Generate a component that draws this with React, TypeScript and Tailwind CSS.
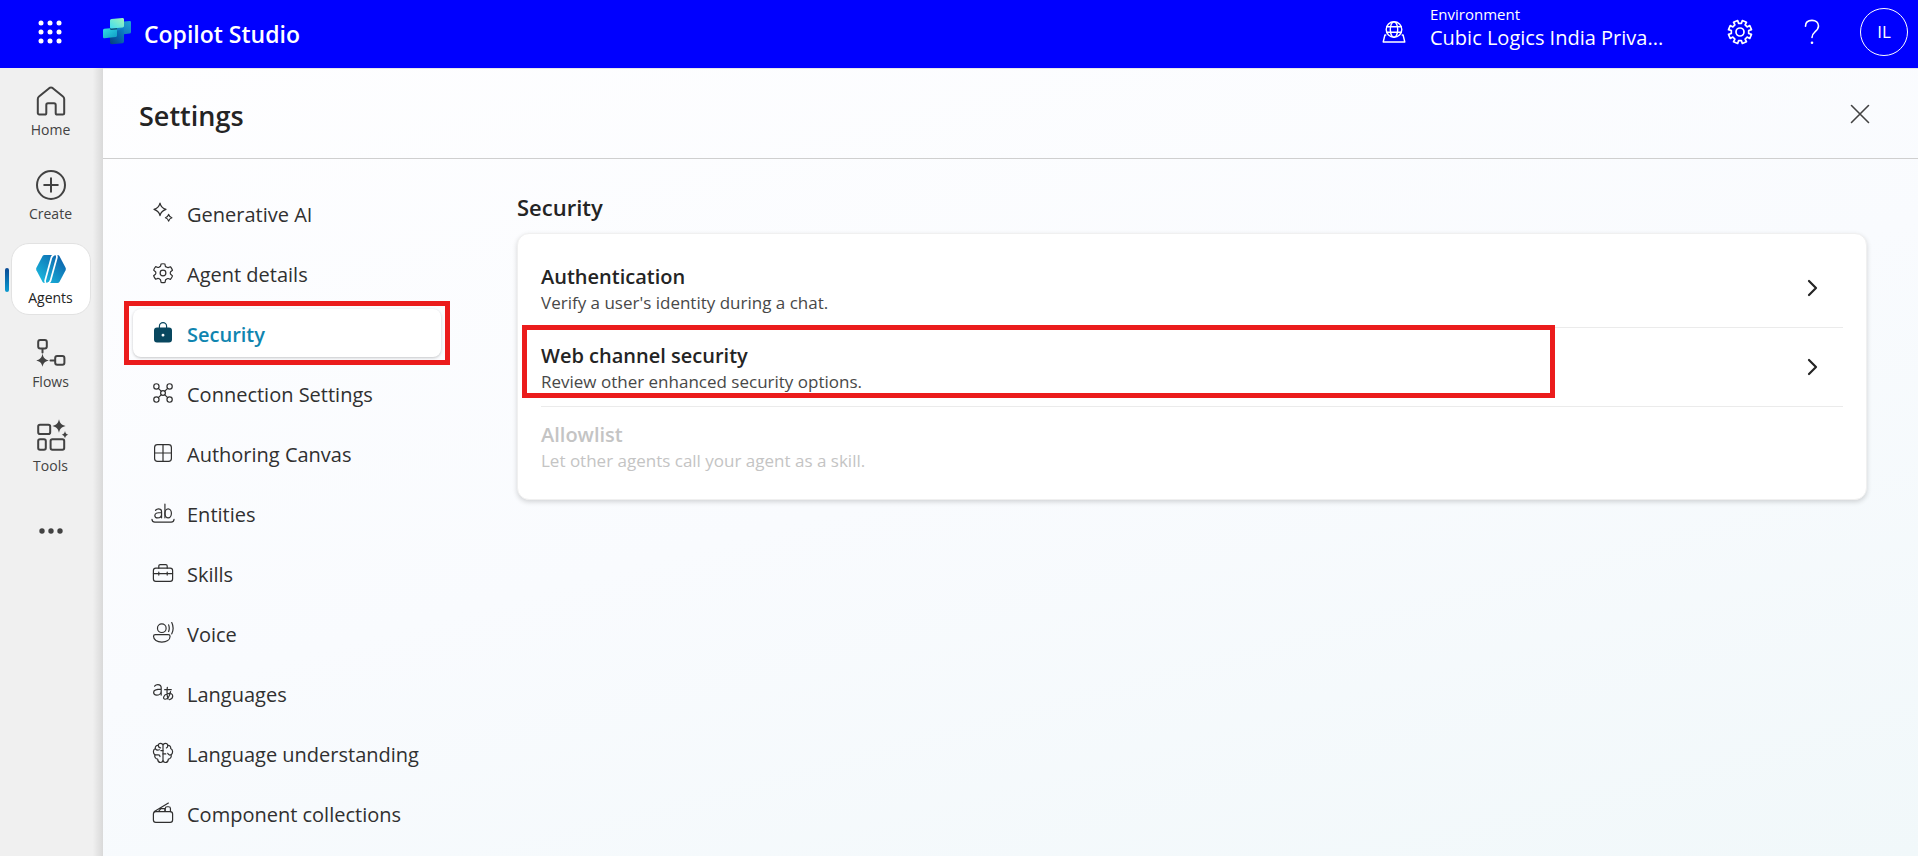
import type { ReactNode } from "react";

function Icon({ children, size = 24, box = 20 }: { children: ReactNode; size?: number; box?: number }) {
  return (
    <svg
      width={size}
      height={size}
      viewBox={`0 0 ${box} ${box}`}
      fill="none"
      stroke="currentColor"
      strokeLinecap="round"
      strokeLinejoin="round"
      aria-hidden="true"
      className="shrink-0"
    >
      {children}
    </svg>
  );
}

/* Header drawings */

function Waffle() {
  return (
    <Icon box={24}>
      <g fill="currentColor" stroke="none">
        {[3, 12, 21].map((y) => [3, 12, 21].map((x) => <circle key={`${x}-${y}`} cx={x} cy={y} r="2.5" />))}
      </g>
    </Icon>
  );
}

function Logo() {
  return (
    <svg width="28" height="28" viewBox="0 0 28 28" aria-hidden="true" className="shrink-0">
      <defs>
        <linearGradient id="logo-mint" x1="0" y1="1" x2="1" y2="0">
          <stop stopColor="#3ddcf0" />
          <stop offset="1" stopColor="#a3f5b8" />
        </linearGradient>
        <linearGradient id="logo-cyan" x1="0" y1="0" x2="1" y2="1">
          <stop stopColor="#33dbe8" />
          <stop offset="1" stopColor="#0e9dc4" />
        </linearGradient>
        <linearGradient id="logo-right" x1="1" y1="0" x2="0" y2="1">
          <stop stopColor="#1fa5d6" />
          <stop offset="1" stopColor="#0a5fae" />
        </linearGradient>
        <linearGradient id="logo-base" x1="1" y1="0" x2="0" y2="1">
          <stop stopColor="#0c86d0" />
          <stop offset="1" stopColor="#043b80" />
        </linearGradient>
      </defs>
      <path d="M7 9.5 21 3.6l5.6-.5c.8 0 1.4.5 1.4 1.3V14c0 .8-.6 1.500-1.400 1.600l-5.600.6L7 18Z" fill="url(#logo-right)" />
      <path d="M7 18 21 9v14.600c0 .8-.6 1.500-1.400 1.600L9 26.300c-1.100.1-2-.6-2-1.700Z" fill="url(#logo-base)" />
      <path d="M7 10 14 9.500v8.300l-7 1.900Z" fill="#0a5376" />
      <path d="M0 12.300c0-.8.6-1.400 1.400-1.500L7 10.300v.4c0 .8.6 1.300 1.400 1.200l5.600-.5v6c0 .8-.6 1.500-1.400 1.600L1.500 20.200c-.8.1-1.500-.5-1.500-1.300Z" fill="url(#logo-cyan)" />
      <path d="M7 2.600c0-.8.6-1.500 1.400-1.600L19.500 0c.8-.1 1.500.5 1.500 1.300V8c0 .8-.6 1.400-1.400 1.500L8.500 10.600C7.700 10.700 7 10.100 7 9.300Z" fill="url(#logo-mint)" />
    </svg>
  );
}

function EnvironmentIcon() {
  return (
    <Icon box={24}>
      <g strokeWidth="1.400">
        <circle cx="12" cy="9.500" r="7.800" />
        <ellipse cx="12" cy="9.500" rx="3.700" ry="7.800" />
        <path d="M4.800 6.800h14.400M4.800 12.200h14.400" />
        <path d="M3.800 15H2.900L1.200 22h21.600l-1.700-7h-.9" />
      </g>
    </Icon>
  );
}

function HeaderGear() {
  const d = Array.from({ length: 8 }, (_, i) => {
    const point = (r: number, deg: number) => {
      const a = ((i * 45 + 22.5 + deg) * Math.PI) / 180;
      return `${(14 + r * Math.cos(a)).toFixed(2)} ${(14 + r * Math.sin(a)).toFixed(2)}`;
    };
    return `${i ? "L" : "M"}${point(8.8, -13)}L${point(11.7, -11)}L${point(11.7, 11)}L${point(8.8, 13)}`;
  }).join("");
  return (
    <Icon size={28} box={28}>
      <path d={`${d}Z`} strokeWidth="1.700" />
      <circle cx="14" cy="14" r="4" strokeWidth="1.700" />
    </Icon>
  );
}

function HelpIcon() {
  return (
    <Icon size={28} box={28}>
      <path d="M7.500 8.200C7.500 4.500 10.200 2.400 14 2.400s6.500 2.300 6.500 5.700c0 2.900-1.700 4.300-3.600 5.900-1.800 1.500-2.900 2.700-2.900 5.400" strokeWidth="1.600" />
      <circle cx="14" cy="24.800" r="1.300" fill="currentColor" stroke="none" />
    </Icon>
  );
}

/* Side rail drawings */

function HomeIcon() {
  return (
    <Icon size={32} box={32}>
      <path
        d="M16 2.400c.6 0 1.100.2 1.500.5l10.500 8.600c.8.6 1.200 1.500 1.200 2.400V28c0 .9-.7 1.500-1.500 1.500h-5.400c-.9 0-1.600-.7-1.600-1.600v-8c0-1-.8-1.700-1.700-1.700h-6c-.9 0-1.700.7-1.700 1.700v8c0 .9-.7 1.600-1.600 1.600H4.300c-.8 0-1.500-.6-1.500-1.500V13.900c0-.9.400-1.800 1.200-2.400l10.500-8.600c.4-.3.900-.5 1.500-.5Z"
        strokeWidth="2"
      />
    </Icon>
  );
}

function CreateIcon() {
  return (
    <Icon size={32} box={32}>
      <circle cx="16" cy="16" r="14" strokeWidth="2" />
      <path d="M16 9.200v13.600M9.200 16h13.600" strokeWidth="2" />
    </Icon>
  );
}

function AgentsIcon() {
  return (
    <svg width="32" height="32" viewBox="0 0 32 32" aria-hidden="true" className="shrink-0">
      <defs>
        <linearGradient id="agents-fill" x1="0" y1="1" x2="1" y2="0">
          <stop stopColor="#1cc3e4" />
          <stop offset="1" stopColor="#0a58a5" />
        </linearGradient>
      </defs>
      <path
        d="M9.400 2h13.200c.8 0 1.400.4 1.800 1.100l6.200 11.700c.4.8.4 1.600 0 2.400l-6.200 11.700c-.4.7-1 1.100-1.800 1.100H9.400c-.8 0-1.400-.4-1.800-1.100L1.400 17.200c-.4-.8-.4-1.600 0-2.400L7.600 3.100C8 2.400 8.600 2 9.400 2Z"
        fill="url(#agents-fill)"
      />
      <path
        d="M11.400 30.500c-1.600-.7-1.500-2.300-1-4L16.300 5c.5-1.800 1.500-3.200 3.300-3.200M20.600 1.500c1.600.7 1.500 2.300 1 4L15.700 27c-.5 1.800-1.500 3.200-3.300 3.200"
        fill="none"
        stroke="#fff"
        strokeWidth="1.700"
      />
    </svg>
  );
}

function FlowsIcon() {
  return (
    <Icon size={32} box={32}>
      <rect x="3.200" y="3" width="8.600" height="8.600" rx="2" strokeWidth="2" />
      <rect x="20.200" y="19" width="9.200" height="8.800" rx="2" strokeWidth="2" />
      <path d="M7.500 12v3.500M15.500 23.400h4" strokeWidth="2" />
      <path d="M7.500 16.500c.9 4.300 1.900 5.600 6.300 6.900-4.400 1.300-5.400 2.500-6.300 6.300-.9-3.800-1.900-5-6.300-6.300 4.400-1.300 5.400-2.600 6.300-6.900Z" fill="currentColor" stroke="none" />
    </Icon>
  );
}

function ToolsIcon() {
  return (
    <Icon size={36} box={36}>
      <g transform="translate(1 -.5)">
        <rect x="4.200" y="6.200" width="12" height="9.400" rx="1.800" strokeWidth="2" />
        <rect x="4.200" y="20.700" width="7.600" height="10.600" rx="1.800" strokeWidth="2" />
        <rect x="16.600" y="20.700" width="13.600" height="10.600" rx="1.800" strokeWidth="2" />
        <path d="M25 .8c1.100 4.400 2.400 5.600 6.600 6.800-4.200 1.200-5.500 2.400-6.600 6.600-1.100-4.200-2.400-5.400-6.600-6.600C22.600 6.400 23.900 5.200 25 .8Z" fill="currentColor" stroke="none" />
        <path d="M31 12.400c.5 2.300 1.200 3 3.300 3.900-2.100.8-2.800 1.400-3.300 3.700-.5-2.300-1.300-2.900-3.300-3.700 2-.9 2.800-1.600 3.300-3.900Z" fill="currentColor" stroke="none" />
      </g>
    </Icon>
  );
}

function MoreIcon() {
  return (
    <Icon size={28} box={28}>
      <g fill="currentColor" stroke="none">
        <circle cx="5" cy="14" r="2.700" />
        <circle cx="14" cy="14" r="2.700" />
        <circle cx="23" cy="14" r="2.700" />
      </g>
    </Icon>
  );
}

/* Settings navigation drawings */

const navItems: { label: string; icon: ReactNode; active?: boolean }[] = [
  {
    label: "Generative AI",
    icon: (
      <g transform="translate(.5 .5)">
        <path d="M7 1.300c.7 3 2 4.300 5 5.200C9 7.400 7.700 8.700 7 11.700 6.300 8.700 5 7.400 2 6.500 5 5.600 6.300 4.300 7 1.300Z" />
        <path d="M14.200 10.700c.4 1.600 1.100 2.300 2.700 2.800-1.600.5-2.300 1.200-2.700 2.800-.4-1.600-1.100-2.300-2.700-2.800 1.600-.5 2.300-1.200 2.700-2.800Z" />
      </g>
    ),
  },
  {
    label: "Agent details",
    icon: (
      <>
        <path d="M8.400 2.500q1.600-.4 3.200 0l.4 2q.1.500.6.300l.9.500q.3.300.8.200l1.900-.700q1.100 1.300 1.700 2.900l-1.600 1.300q-.3.300-.2.700v.700q0 .5.300.7l1.500 1.300q-.6 1.600-1.700 2.900l-1.900-.7q-.5-.1-.8.200l-.9.500q-.4.200-.5.700l-.4 1.800q-1.700.4-3.300 0L8 15.900q-.1-.5-.5-.7l-.9-.5q-.4-.3-.8-.2l-1.900.7q-1.100-1.300-1.700-2.900L3.700 11q.3-.3.300-.7v-.7q0-.4-.3-.7L2.200 7.600Q2.800 6 3.900 4.700l1.900.7q.4.100.8-.2l.9-.5q.4-.2.500-.600Z" />
        <circle cx="10" cy="10" r="2.400" />
      </>
    ),
  },
  {
    label: "Security",
    active: true,
    icon: (
      <>
        <path d="M7 6.500V4.300a3 3 0 0 1 6 0v2.200" />
        <path fillRule="evenodd" d="M5 5.500h10A2.500 2.500 0 0 1 17.500 8v7.500A2.500 2.500 0 0 1 15 18H5a2.500 2.500 0 0 1-2.500-2.500V8A2.500 2.500 0 0 1 5 5.500ZM10 10.600a1.200 1.200 0 1 0 0 2.400 1.200 1.200 0 0 0 0-2.400Z" fill="currentColor" stroke="none" />
      </>
    ),
  },
  {
    label: "Connection Settings",
    icon: (
      <>
        <circle cx="4.500" cy="4.500" r="2.200" />
        <circle cx="15.500" cy="4.500" r="2.200" />
        <circle cx="4.500" cy="15.500" r="2.200" />
        <circle cx="15.500" cy="15.500" r="2.200" />
        <circle cx="10" cy="10" r="2" />
        <path d="m6.100 6.100 2.400 2.400M13.900 6.100l-2.400 2.400M6.100 13.900l2.400-2.400M13.900 13.900l-2.400-2.400" />
      </>
    ),
  },
  {
    label: "Authoring Canvas",
    icon: (
      <>
        <rect x="3" y="3" width="14" height="14" rx="2.400" />
        <path d="M10 3v14M3 10h14" />
      </>
    ),
  },
  {
    label: "Entities",
    icon: (
      <>
        <path d="M3.800 7.700c.7-.8 1.500-1.200 2.500-1.200 1.500 0 2.500.9 2.500 2.400V14M8.800 9.600c-3.500 0-5.600.4-5.600 2.400 0 1.300 1 2.100 2.300 2.100 1.600 0 3.300-1 3.300-3.100M11.600 2.600V14" />
        <ellipse cx="14.300" cy="10.300" rx="2.700" ry="3.800" />
        <path d="M.8 15.300c.2 1.700.9 2.300 2.400 2.300h13.600c1.500 0 2.200-.6 2.400-2.300" />
      </>
    ),
  },
  {
    label: "Skills",
    icon: (
      <>
        <rect x="2" y="6" width="16" height="11" rx="2" />
        <path d="M6.500 6V4.200c0-.7.500-1.200 1.200-1.200h4.600c.7 0 1.200.5 1.200 1.200V6M2 10.500h16M6.500 9.300v2.400M13.500 9.300v2.400" />
      </>
    ),
  },
  {
    label: "Voice",
    icon: (
      <>
        <circle cx="9" cy="6" r="3.600" />
        <path d="M3.600 11.300h10.800c.8 0 1.500.7 1.500 1.500 0 3-3 4.800-6.900 4.800s-6.900-1.800-6.900-4.800c0-.8.700-1.500 1.500-1.500ZM14.700 3.200c.7 1.900.7 3.700 0 5.600M17.300 1.300c1.500 3.100 1.500 6.300 0 9.400" />
      </>
    ),
  },
  {
    label: "Languages",
    icon: (
      <>
        <path d="M3 4.300C3.700 3.400 4.600 3 5.700 3c1.700 0 2.800 1 2.800 2.700v6M8.500 6.800C4.800 6.800 2.200 7 2.200 9.400c0 1.500 1.100 2.400 2.500 2.400 1.900 0 3.800-1.200 3.800-3.500" />
        <path d="M11.400 7.200h5.500M13.600 5.200c-.5 4.300-.3 7.500.7 10M16.300 8.900c-.7 3.300-2.500 6.300-4.500 6.300-2.300 0-1.600-3.600 2-4.600 2.700-.7 4.300.2 4.300 2 0 1.600-1 2.600-2.600 2.900" />
      </>
    ),
  },
  {
    label: "Language understanding",
    icon: (
      <>
        <path d="M10 4c0-1.300-.9-2-2-2s-1.900.7-2 1.700C4.500 3.500 3.300 4.700 3.600 6.300 2.500 6.900 2 7.700 2 9s.5 2 1.300 2.500c-.6 1.500.3 3.400 2.200 3.600.2 1.800 1.200 2.800 2.500 2.800s2-.8 2-2.200ZM10 4c0-1.300.9-2 2-2s1.900.7 2 1.700c1.500-.2 2.700 1 2.400 2.600 1.100.6 1.600 1.400 1.600 2.700s-.5 2-1.300 2.500c.6 1.500-.3 3.400-2.200 3.600-.2 1.800-1.200 2.800-2.500 2.800s-2-.8-2-2.200" />
        <path d="M6.200 3.800c0 1.200.7 1.900 1.800 1.900M3.700 6.500c.8 1.100 2 1.300 3.300.8M3.300 11.500H6c.9 0 1.500.6 1.500 1.500M10 8H8.200M16.700 11.500c-1.200.5-2.200.1-2.800-1.200M10 10.800h2.300M14 3.900c0 .9-.4 1.500-1.200 1.900" />
      </>
    ),
  },
  {
    label: "Component collections",
    icon: (
      <>
        <rect x="2" y="8.800" width="16" height="9" rx="2" />
        <path d="M2.800 8.800 14.500 1.700M6.500 8.500l1.700-2.100 3.300-.1v2.200M11.900 8.700V6.300c0-.9.600-1.500 1.500-1.500h1.200c.9 0 1.600.6 1.600 1.500v2.500" />
      </>
    ),
  },
];

const railItems: { label: string; icon: ReactNode; active?: boolean }[] = [
  { label: "Home", icon: <HomeIcon /> },
  { label: "Create", icon: <CreateIcon /> },
  { label: "Agents", icon: <AgentsIcon />, active: true },
  { label: "Flows", icon: <FlowsIcon /> },
  { label: "Tools", icon: <ToolsIcon /> },
];

const options = [
  { title: "Authentication", text: "Verify a user's identity during a chat." },
  { title: "Web channel security", text: "Review other enhanced security options.", marked: true },
  { title: "Allowlist", text: "Let other agents call your agent as a skill.", disabled: true },
];

function Header() {
  return (
    <header className="flex h-[68px] shrink-0 items-center justify-between bg-[#0000ff] pr-[10px] pb-1 pl-[38px] text-white">
      <div className="flex items-center">
        <button type="button" aria-label="App launcher">
          <Waffle />
        </button>
        <a href="#home" className="ml-[41px] flex items-center gap-[13px]">
          <Logo />
          <span className="pt-1 text-[23px] leading-8 font-semibold">Copilot Studio</span>
        </a>
      </div>
      <div className="flex items-center">
        <button type="button" className="flex items-center gap-6 text-left">
          <EnvironmentIcon />
          <span className="flex w-[246px] flex-col pb-3 whitespace-nowrap">
            <span className="text-[15px] leading-6">Environment</span>
            <span className="text-xl leading-6">Cubic Logics India Priva...</span>
          </span>
        </button>
        <button type="button" aria-label="Settings" className="ml-[50px]">
          <HeaderGear />
        </button>
        <button type="button" aria-label="Help" className="ml-11">
          <HelpIcon />
        </button>
        <button type="button" className="ml-[34px] flex size-12 items-center justify-center rounded-full border border-white text-[17px]">
          IL
        </button>
      </div>
    </header>
  );
}

function Rail() {
  return (
    <nav aria-label="Main" className="flex w-[103px] shrink-0 flex-col items-center gap-3 bg-gradient-to-r from-[#f0f0f0] from-90% to-[#d9d9d9] pt-[7px] pr-[2px]">
      {railItems.map((item) => (
        <a
          key={item.label}
          href={`#${item.label}`}
          className={
            "relative flex h-[72px] w-20 flex-col items-center justify-center rounded-[18px] border text-[14px] leading-5 " +
            (item.active ? "border-[#e2e2e2] bg-white text-[#242424]" : "border-transparent text-[#424242]")
          }
        >
          {item.active && (
            <span className="absolute top-6 -left-[7px] h-6 w-1 rounded-sm bg-gradient-to-b from-[#0a4a94] to-[#0c9bd0]" />
          )}
          <span className="flex h-[38px] items-center">{item.icon}</span>
          {item.label}
        </a>
      ))}
      <button type="button" aria-label="More" className="mt-[22px] text-[#424242]">
        <MoreIcon />
      </button>
    </nav>
  );
}

function SettingsNav() {
  return (
    <nav aria-label="Settings" className="flex w-[308px] shrink-0 flex-col gap-3">
      {navItems.map((item) => (
        <a
          key={item.label}
          href={`#${item.label}`}
          className={
            "relative flex h-12 items-center gap-3 rounded-lg pl-[18px] text-xl " +
            (item.active ? "bg-white font-semibold text-[#0f85b0] shadow-[0_1px_3px_rgba(0,0,0,0.22)]" : "text-[#303030]")
          }
        >
          {item.active && <span className="absolute -inset-x-[9px] -inset-y-2 border-[5px] border-[#eb1c1c]" />}
          <span className={item.active ? "text-[#08475f]" : ""}>
            <Icon>{item.icon}</Icon>
          </span>
          <span className="pt-1 leading-6">{item.label}</span>
        </a>
      ))}
    </nav>
  );
}

function SecurityPanel() {
  return (
    <section className="min-w-0 flex-1">
      <h2 className="pt-[2px] text-[22px] leading-8 font-semibold text-[#242424]">Security</h2>
      <ul className="mt-[10px] rounded-xl border border-[#f0f0f0] bg-white px-[23px] pt-[15px] pb-[14px] shadow-[0_2px_5px_rgba(0,0,0,0.16)]">
        {options.map((option) => (
          <li key={option.title} className="relative border-b border-[#ebebeb] last:border-b-0">
            <button
              type="button"
              disabled={option.disabled}
              className="flex h-[78px] w-full items-center justify-between pr-[21px] text-left text-[#242424] disabled:text-[#c4c4c4]"
            >
              <span className="flex flex-col pt-[2px]">
                <span className="text-xl leading-7 font-semibold">{option.title}</span>
                <span className={"text-[17px] leading-6 " + (option.disabled ? "" : "text-[#484848]")}>{option.text}</span>
              </span>
              {!option.disabled && (
                <Icon size={20}>
                  <path d="m7 3 7 7-7 7" strokeWidth="2.200" />
                </Icon>
              )}
            </button>
            {option.marked && (
              <span className="pointer-events-none absolute -top-[3px] right-[288px] bottom-2 -left-[19px] border-[5px] border-[#eb1c1c]" />
            )}
          </li>
        ))}
      </ul>
    </section>
  );
}

export default function App() {
  return (
    <div className="flex min-h-screen flex-col font-['Open_Sans',sans-serif]">
      <Header />
      <div className="flex flex-1">
        <Rail />
        <main className="flex min-w-0 flex-1 flex-col border-t border-[#e6e6ea] bg-linear-[165deg] from-[#fefeff] via-[#f9fbfe] to-[#f1f8fa]">
          <div className="flex h-[90px] shrink-0 items-center justify-between border-b border-[#cfcfcf] pr-12 pl-9">
            <h1 className="pt-1 text-[27px] leading-9 font-semibold text-[#242424]">Settings</h1>
            <button type="button" aria-label="Close" className="text-[#424242]">
              <Icon size={20}>
                <path d="m1.500 1.500 17 17M18.500 1.500l-17 17" strokeWidth="1.600" />
              </Icon>
            </button>
          </div>
          <div className="flex gap-[76px] pt-[30px] pr-[51px] pb-[18px] pl-[30px]">
            <SettingsNav />
            <SecurityPanel />
          </div>
        </main>
      </div>
    </div>
  );
}
